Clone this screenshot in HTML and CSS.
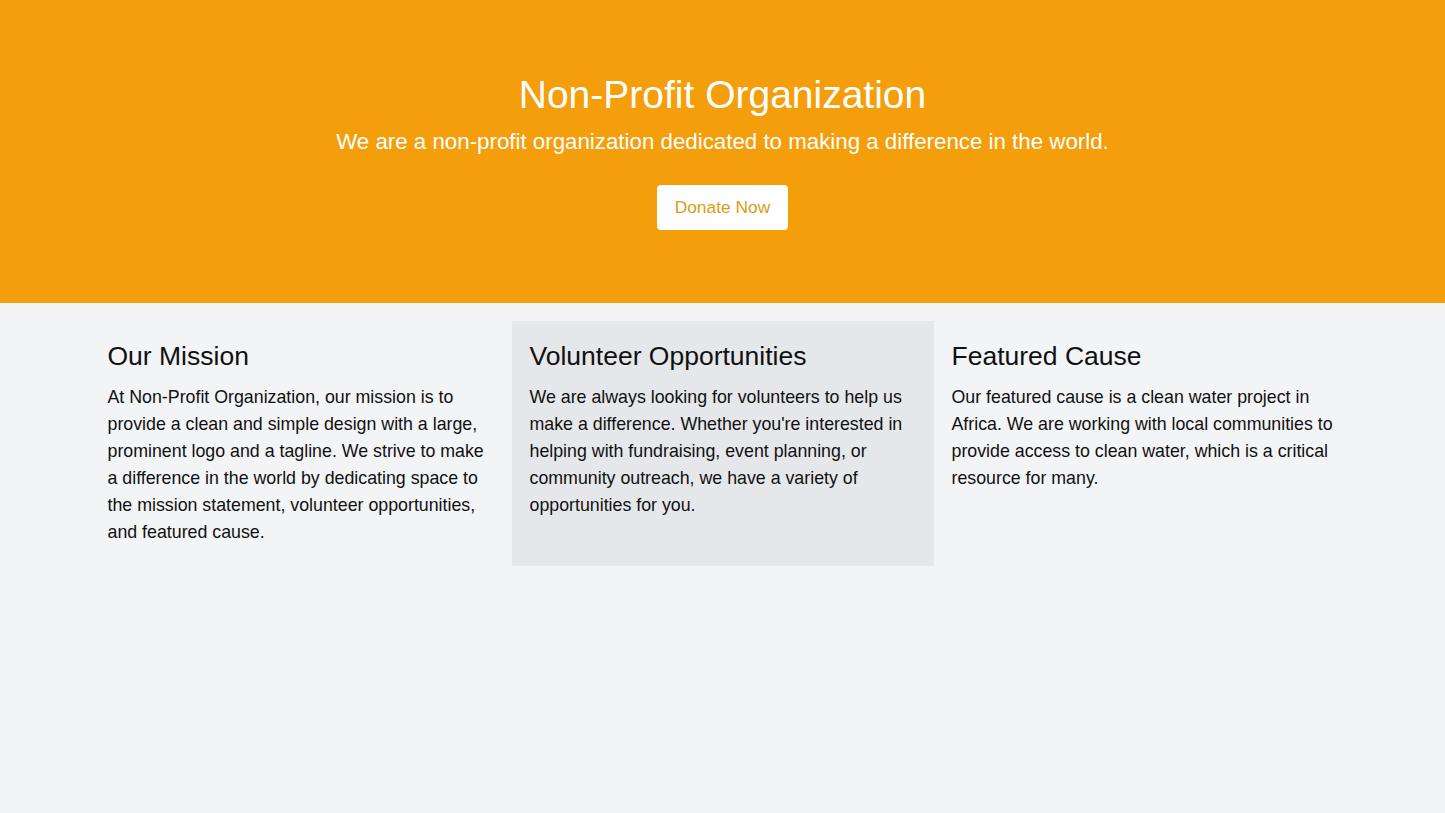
FILE: index.html
```html
<!DOCTYPE html>
<html lang="en">
<head>
<meta charset="utf-8">
<title>Non-Profit Organization</title>
<link rel="stylesheet" href="styles.css">
</head>
<body>
  <header class="hero">
    <h1 class="hero-title">Non-Profit Organization</h1>
    <p class="hero-sub">We are a non-profit organization dedicated to making a difference in the world.</p>
    <a class="btn" href="#">Donate Now</a>
  </header>
  <main class="cols">
    <section class="col">
      <h2>Our Mission</h2>
      <p>At Non-Profit Organization, our mission is to provide a clean and simple design with a large, prominent logo and a tagline. We strive to make a difference in the world by dedicating space to the mission statement, volunteer opportunities, and featured cause.</p>
    </section>
    <section class="col col-alt">
      <h2>Volunteer Opportunities</h2>
      <p>We are always looking for volunteers to help us make a difference. Whether you're interested in helping with fundraising, event planning, or community outreach, we have a variety of opportunities for you.</p>
    </section>
    <section class="col">
      <h2>Featured Cause</h2>
      <p>Our featured cause is a clean water project in Africa. We are working with local communities to provide access to clean water, which is a critical resource for many.</p>
    </section>
  </main>
</body>
</html>
```

FILE: styles.css
```css
* { box-sizing: border-box; }
html, body { margin: 0; padding: 0; }
body {
  background: #f3f4f6;
  font-family: "Liberation Sans", Arial, sans-serif;
  color: #111;
  min-height: 813px;
}
.hero {
  background: #f59e0b;
  color: #fff;
  text-align: center;
  padding: 73px 16px 73px;
  display: flex;
  flex-direction: column;
  align-items: center;
}
.hero-title {
  margin: 0;
  font-size: 39px;
  line-height: 44px;
  font-weight: 400;
}
.hero-sub {
  margin: 10px 0 0;
  font-size: 22.3px;
  line-height: 30px;
}
.btn {
  margin-top: 28px;
  display: inline-block;
  background: #fff;
  color: #dc9d12;
  text-decoration: none;
  font-size: 17.4px;
  line-height: 45px;
  height: 45px;
  padding: 0 18px;
  border-radius: 4px;
}
.cols {
  max-width: 1266px;
  margin: 18px auto 0;
  display: grid;
  grid-template-columns: repeat(3, 1fr);
}
.col {
  padding: 18px 18px 20px;
}
.col-alt { background: #e5e7eb; }
.col h2 {
  margin: 0;
  font-size: 26.5px;
  line-height: 34px;
  font-weight: 400;
}
.col p {
  margin: 11px 0 0;
  font-size: 17.8px;
  line-height: 27px;
}
```
